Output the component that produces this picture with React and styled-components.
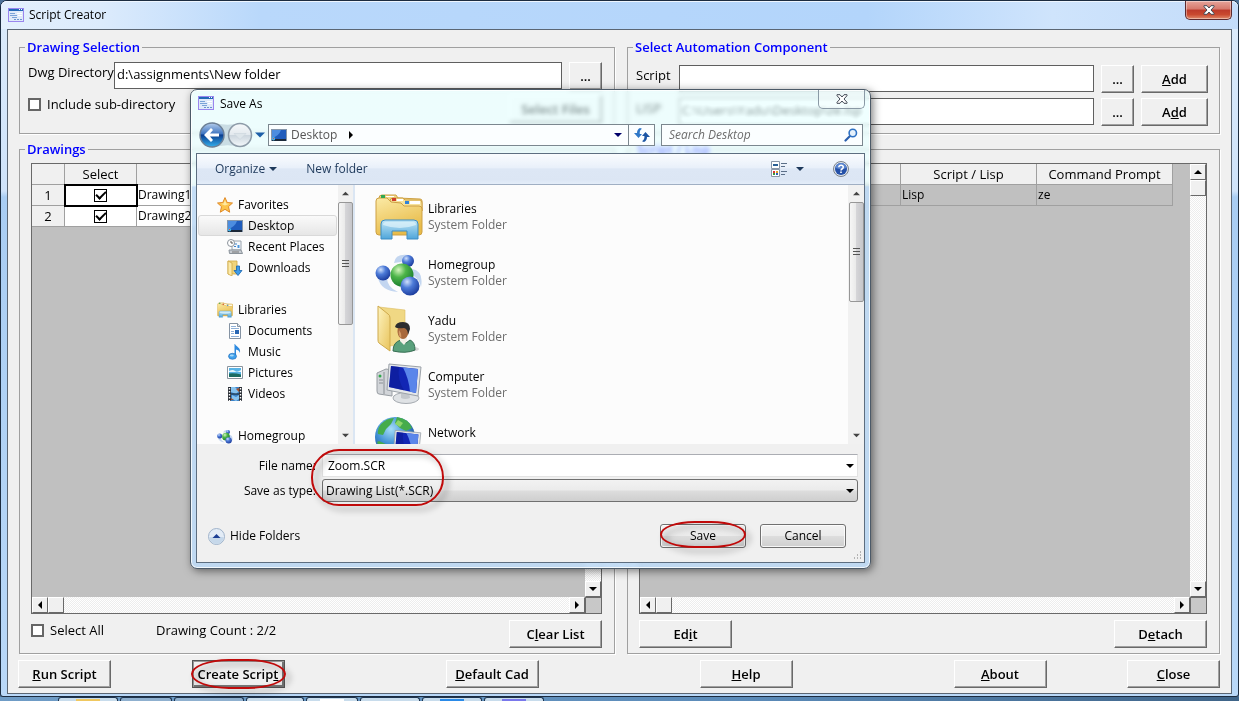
import styled, { createGlobalStyle, css } from 'styled-components';

const GlobalStyle = createGlobalStyle`
    * {
        box-sizing: border-box;
    }
    body {
        margin: 0;
        background: #4d7197;
        color: #000;
        font: 12px/16px 'Open Sans', 'Noto Sans', sans-serif;
    }
    button, input, select {
        font: inherit;
        color: inherit;
        margin: 0;
    }
`
const Screen = styled.div`
    position: relative;
    min-height: 100vh;
    display: flex;
    flex-direction: column;
`

/* ---------- main window ---------- */

const Window = styled.main`
    flex: 1;
    display: flex;
    flex-direction: column;
    border: 1px solid #1c2c40;
    border-radius: 7px 7px 3px 3px;
    background: linear-gradient(#dcebfb 0, #cfe3fa 190px, #a9cdf3 196px, #b9d8f8 100%);
`
const TitleBar = styled.header`
    height: 28px;
    padding: 0 6px 0 7px;
    display: flex;
    align-items: center;
    gap: 5px;
    border-radius: 6px 6px 0 0;
    box-shadow: inset 0 1px #eef6ff;
    background: linear-gradient(90deg, #e4f0fd 0, #dcebfc 100px, #b9d8fb 260px, #b3d5fb 70%, #cfe4fc 85%, #c3dcfa 100%);
`
const Title = styled.h1`
    margin: 0;
    flex: 1;
    font-size: 12px;
    font-weight: 400;
`
const RedClose = styled.button`
    align-self: flex-start;
    width: 47px;
    height: 19px;
    padding: 0;
    display: grid;
    place-items: center;
    border: 1px solid #5c2a2e;
    border-top: 0;
    border-radius: 0 0 5px 5px;
    box-shadow: inset 0 0 0 1px rgba(255, 255, 255, 0.4);
    background: linear-gradient(#e5a49a 0, #d5786c 45%, #bd3a2a 50%, #c9492f 75%, #e08a6a 100%);
`
const Client = styled.div`
    flex: 1;
    margin: 0 6px 2px;
    padding: 8px 11px 5px;
    display: flex;
    flex-direction: column;
    gap: 6px;
    border: 1px solid #5b6673;
    background: #f0f0f0;
    font-size: 13px;
`
const Columns = styled.div`
    flex: 1;
    display: grid;
    grid-template-columns: minmax(0, 596fr) minmax(0, 593fr);
    gap: 12px;
`
const Column = styled.div`
    display: flex;
    flex-direction: column;
    gap: 6px;
`
const Group = styled.fieldset`
    min-width: 0;
    margin: 0;
    padding: ${({ $pad }) => $pad};
    display: flex;
    flex-direction: column;
    gap: 6px;
    border: 1px solid #a0a0a0;
    box-shadow: 1px 1px #fff;
    ${({ $grow }) => ($grow ? 'flex: 1;' : 'height: 96px;')}
`
const Legend = styled.legend`
    margin-left: ${({ $inset }) => $inset};
    padding: 0 2px;
    color: #00f;
    font-size: 13px;
    font-weight: 600;
    line-height: 18px;
`
const FieldRow = styled.div`
    height: 27px;
    display: flex;
    gap: 7px;
`
const FieldLabel = styled.label`
    width: ${({ $width }) => $width};
    margin-right: -7px;
    line-height: 20px;
    white-space: nowrap;
`
const TextBox = styled.input`
    flex: 1;
    min-width: 0;
    padding: 0 2px 4px;
    border: 1px solid #5f5f5f;
    background: #fff;
`
const Button = styled.button`
    width: ${({ $width }) => $width || '93px'};
    height: 28px;
    padding: 0;
    border: 1px solid;
    border-color: #fff #696969 #696969 #fff;
    box-shadow: inset -1px -1px #a0a0a0;
    background: #f0f0f0;
    font-size: 13px;
    font-weight: 600;
    ${({ $focused }) => $focused && css`
        border-color: #555;
        box-shadow: inset 1px 1px #999, inset -2px -2px #777;
    `}
`
const Check = styled.label`
    height: 18px;
    display: flex;
    align-items: center;
    gap: 6px;
`
const Tick = styled.input`
    appearance: none;
    width: 13px;
    height: 13px;
    margin: 0;
    display: grid;
    place-items: center;
    border: ${({ $thin }) => ($thin ? '1px solid #000' : '2px solid #666')};
    background: #fff;
    &:checked::after {
        content: '';
        width: 8px;
        height: 4px;
        margin-bottom: 3px;
        border: solid #000;
        border-width: 0 0 2px 2px;
        transform: rotate(-45deg);
    }
`
const Spacer = styled.span`
    flex: ${({ $grow }) => $grow || 1};
`

/* ---------- sheets ---------- */

const Sheet = styled.div`
    flex: 1;
    display: grid;
    grid-template-columns: minmax(0, 1fr) 16px;
    grid-template-rows: minmax(0, 1fr) 16px;
    border: 1px solid #696969;
    background: #c0c0c0;
`
const SheetBody = styled.div`
    overflow: hidden;
`
const Table = styled.table`
    width: ${({ $width }) => $width};
    table-layout: fixed;
    border-collapse: separate;
    border-spacing: 0;
    th, td {
        height: 21px;
        padding: 0 2px;
        border: solid #a0a0a0;
        border-width: 0 1px 1px 0;
        font-weight: 400;
        line-height: 20px;
        text-align: left;
        white-space: nowrap;
        background: ${({ $rows }) => $rows};
    }
    th {
        text-align: center;
        background: #f0f0f0;
    }
    td {
        padding: 0 1px;
        font-size: 12px;
    }
`
const ActiveCell = styled.td`
    outline: 2px solid #000;
    outline-offset: -1px;
`
const TickHolder = styled.div`
    display: flex;
    justify-content: center;
`
const Bar = styled.div`
    display: flex;
    flex-direction: ${({ $down }) => ($down ? 'column' : 'row')};
    background: repeating-conic-gradient(#fff 0 25%, #ededed 0 50%) 0 0 / 2px 2px;
`
const BarButton = styled.button`
    width: 16px;
    height: 16px;
    padding: 0;
    display: grid;
    place-items: center;
    border: 1px solid;
    border-color: #fff #696969 #696969 #fff;
    background: #f0f0f0;
`
const Corner = styled.div`
    border: solid #696969;
    border-width: 1px 0 0 1px;
    background: #c8c8c8;
`
const SheetFooter = styled.div`
    height: 28px;
    display: flex;
    ${Check} {
        height: 20px;
        width: 125px;
    }
`
const Count = styled.span`
    line-height: 20px;
`
const ButtonRow = styled.div`
    display: flex;
    margin: 0 0 0 -1px;
`
const Marked = styled.span`
    position: relative;
    display: flex;
`
const Ring = styled.i`
    position: absolute;
    inset: ${({ $inset }) => $inset};
    border: 2px solid #c00a0a;
    border-radius: ${({ $round }) => $round};
    filter: drop-shadow(4px 4px 3px rgba(0, 0, 0, 0.4));
    pointer-events: none;
`

/* ---------- save dialog ---------- */

const Dialog = styled.section`
    position: absolute;
    left: 190px;
    top: 89px;
    width: 681px;
    padding: 0 5px 5px;
    border: 1px solid #4c5a68;
    border-radius: 7px;
    box-shadow: inset 0 0 0 1px rgba(255, 255, 255, 0.8), 2px 2px 8px rgba(0, 0, 0, 0.5);
    background:
        linear-gradient(rgba(226, 255, 255, 0.55) 0 95px, rgba(190, 218, 245, 0.9) 97px);
    backdrop-filter: blur(2px) brightness(1.04);
`
const DialogTitle = styled.header`
    height: 34px;
    padding-left: 2px;
    display: flex;
    gap: 6px;
    svg {
        margin-top: 6px;
    }
    h2 {
        flex: 1;
        margin: 6px 0 0;
        font-size: 12px;
        font-weight: 400;
    }
`
const GlassClose = styled.button`
    width: 47px;
    height: 19px;
    padding: 0;
    display: grid;
    place-items: center;
    border: 1px solid #8a99a5;
    border-top: 0;
    border-radius: 0 0 5px 5px;
    background: rgba(255, 255, 255, 0.3);
    svg {
        margin: 0;
    }
`
const NavRow = styled.div`
    height: 22px;
    margin: 0 2px 7px 3px;
    display: flex;
    align-items: center;
`
const PlainButton = styled.button`
    padding: 0;
    display: flex;
    align-items: center;
    gap: ${({ $gap }) => $gap || '0'};
    border: 0;
    background: none;
`
const Address = styled.div`
    flex: 1;
    height: 22px;
    margin: 0 6px 0 3px;
    display: flex;
    align-items: center;
    border: 1px solid #7b878f;
    background: rgba(252, 254, 255, 0.95);
    color: #555;
    svg:first-child {
        margin: 0 4px 0 2px;
    }
`
const AddressName = styled.span`
    flex: 1;
    display: flex;
    align-items: center;
    gap: 8px;
`
const Refresh = styled.button`
    width: 26px;
    height: 20px;
    margin-left: 6px;
    padding: 0;
    display: grid;
    place-items: center;
    border: 0;
    border-left: 1px solid #7b878f;
    background: none;
    svg:first-child {
        margin: 0;
    }
`
const Search = styled.div`
    width: 202px;
    height: 22px;
    padding: 0 4px 0 7px;
    display: flex;
    align-items: center;
    border: 1px solid #7b878f;
    background: rgba(252, 254, 255, 0.95);
    input {
        flex: 1;
        min-width: 0;
        padding: 0;
        border: 0;
        background: none;
    }
    input::placeholder {
        color: #6d6d6d;
        font-style: italic;
    }
`
const DialogClient = styled.div`
    border: 1px solid #5d6e80;
    background: #f0f0f0;
`
const Toolbar = styled.div`
    height: 31px;
    padding: 0 15px 0 18px;
    display: flex;
    align-items: center;
    color: #1e395b;
    border-bottom: 1px solid #a0afc3;
    background: linear-gradient(#fafcfe 0, #e9f0fa 45%, #dde7f5 50%, #dce6f4 85%, #e4edf9 100%);
`
const Panes = styled.div`
    height: 259px;
    display: grid;
    grid-template-columns: 141px 17px 1fr 16px;
    overflow: hidden;
    background: #fcfcfc;
`
const Tree = styled.ul`
    margin: 0;
    padding: 9px 1px 0;
    list-style: none;
    overflow: hidden;
`
const TreeItem = styled.li`
    height: 21px;
    margin-bottom: ${({ $last }) => ($last ? '21px' : '0')};
    border: 1px solid ${({ $active }) => ($active ? '#d9d9d9' : 'transparent')};
    border-radius: 3px;
    background: ${({ $active }) => ($active ? 'linear-gradient(#fafafa, #e6e6e6)' : 'none')};
    a {
        height: 19px;
        padding-left: ${({ $deep }) => ($deep ? '28px' : '18px')};
        display: flex;
        align-items: center;
        gap: 5px;
        color: #000;
        text-decoration: none;
        white-space: nowrap;
    }
`
const AeroBar = styled.div`
    display: flex;
    flex-direction: column;
    align-items: center;
    justify-content: space-between;
    background: #f1f1f1;
    border-right: ${({ $edge }) => ($edge ? '2px solid #dbe6f3' : '0')};
    button {
        width: 15px;
        height: 17px;
        padding: 0;
        display: grid;
        place-items: center;
        border: 0;
        background: none;
    }
`
const AeroThumb = styled.div`
    width: 15px;
    height: ${({ $height }) => $height};
    margin-bottom: auto;
    display: grid;
    place-items: center;
    border: 1px solid #979797;
    border-radius: 2px;
    background: linear-gradient(90deg, #f6f6f6 0, #eaeaea 45%, #d5d5d8 50%, #c6c6ca 100%);
`
const Files = styled.ul`
    margin: 0;
    padding: 4px 0 0 20px;
    list-style: none;
    overflow: hidden;
`
const File = styled.li`
    height: 56px;
    display: flex;
    gap: 5px;
    align-items: center;
    div {
        min-height: 32px;
    }
    small {
        display: block;
        font-size: 12px;
        color: #6d6d6d;
    }
`
const DialogFooter = styled.div`
    position: relative;
    padding: 10px 6px 14px 0;
`
const SaveRow = styled.div`
    height: 23px;
    margin-bottom: 2px;
    display: grid;
    grid-template-columns: 119px 1fr;
    column-gap: 6px;
    align-items: center;
    label {
        text-align: right;
    }
`
const Combo = styled.div`
    position: relative;
    height: 23px;
    display: flex;
    border: 1px solid ${({ $raised }) => ($raised ? '#707070' : '#e3e3e3')};
    border-top-color: ${({ $raised }) => ($raised ? '#707070' : '#abadb3')};
    border-radius: ${({ $raised }) => ($raised ? '3px' : '0')};
    background: ${({ $raised }) => ($raised ? 'linear-gradient(#f2f2f2 0, #ebebeb 48%, #dddddd 52%, #cfcfcf 100%)' : '#fff')};
    input, select {
        flex: 1;
        appearance: none;
        padding: 0 20px 0 ${({ $raised }) => ($raised ? '3px' : '5px')};
        border: 0;
        background: none;
    }
    svg {
        position: absolute;
        right: 3px;
        top: 7px;
        pointer-events: none;
    }
`
const Actions = styled.div`
    margin: 22px 12px 0 11px;
    display: flex;
    gap: 14px;
`
const AeroButton = styled.button`
    width: 86px;
    height: 24px;
    padding: 0;
    border: 1px solid #707070;
    border-radius: 3px;
    box-shadow: inset 0 0 0 1px rgba(255, 255, 255, 0.8);
    background: linear-gradient(#f2f2f2 0, #ebebeb 48%, #dddddd 52%, #cfcfcf 100%);
`
const Grip = styled.svg`
    position: absolute;
    right: 2px;
    bottom: 2px;
`

/* ---------- taskbar ---------- */

const Taskbar = styled.footer`
    height: 4px;
    padding-left: 58px;
    display: flex;
    gap: 2px;
    overflow: hidden;
    background: linear-gradient(90deg, #6f9cc6, #5b8bb9 60%, #3f6488);
`
const Task = styled.div`
    width: ${({ $wide }) => $wide};
    display: flex;
    justify-content: center;
    border: 1px solid #1e3550;
    border-bottom: 0;
    border-radius: 3px 3px 0 0;
    background: ${({ $lit }) => ($lit ? '#c8dcec' : '#8fb0cf')};
    i {
        width: 24px;
        margin-top: 1px;
        background: ${({ $tone }) => $tone};
    }
`

/* ---------- drawings ---------- */

const Arrow = ({ dir = 'down', size = 8, fill = '#000' }) => {
    const d = {
        down: 'M0 2h8L4 6z',
        up: 'M0 6h8L4 2z',
        left: 'M6 0v8L2 4z',
        right: 'M2 0v8l4-4z',
    }[dir]
    return <svg width={size} height={size} viewBox="0 0 8 8"><path d={d} fill={fill} /></svg>
}

const AppIcon = () => (
    <svg width="16" height="14" viewBox="0 0 16 14">
        <rect x=".5" y=".5" width="15" height="13" fill="#dfeafa" stroke="#9a86ee" />
        <path d="M1 1h14v2H1z" fill="#2468b8" />
        <path d="M11 1h1v1h-1zM13 1h1v1h-1z" fill="#fff" />
        <path d="M2 5.500h5M2 7.500h7M4 9.500h5" stroke="#7ba3d8" />
        <path d="M9 5.500h5M10 7.500h4" stroke="#fff" />
        <path d="M6 11.500h2M9 11.500h2M12 11.500h2" stroke="#6c93cc" />
    </svg>
)

const CloseGlyph = () => (
    <svg width="12" height="10" viewBox="0 0 12 10">
        <path d="M1 .7h3L6 3 8 .7h3v1L8 5l3 3.300v1H8L6 7 4 9.300H1v-1L4 5 1 1.700z" fill="#fff" stroke="#434a55" />
    </svg>
)

const NavButtons = () => (
    <svg width="56" height="28" viewBox="0 0 56 28">
        <defs>
            <linearGradient id="back" x2="0" y2="1">
                <stop stopColor="#b4cdec" /><stop offset=".45" stopColor="#3e74c0" />
                <stop offset=".5" stopColor="#0b3d8f" /><stop offset="1" stopColor="#35b1ee" />
            </linearGradient>
            <linearGradient id="fwd" x2="0" y2="1">
                <stop stopColor="#f6f9fb" /><stop offset=".48" stopColor="#e3e9ee" />
                <stop offset=".52" stopColor="#ccd6de" /><stop offset="1" stopColor="#f4f8fb" />
            </linearGradient>
        </defs>
        <path d="M13 1q14 5 28 1v24q-14-4-28 1z" fill="#b4c8d4" opacity=".6" />
        <circle cx="13" cy="14" r="12" fill="url(#back)" stroke="#6d8096" strokeWidth="1.500" />
        <circle cx="41" cy="14" r="11.500" fill="url(#fwd)" stroke="#8d9ba8" strokeWidth="1.500" />
        <path d="M5 14l7-7 2 2-3 3.500h9v3h-9l3 3.500-2 2z" fill="#fff" />
        <path d="M35 12.500h12l-6 6z" fill="#dde5ea" stroke="#c9d4db" strokeWidth=".6" />
    </svg>
)

const RefreshIcon = () => (
    <svg width="16" height="14" viewBox="0 0 16 14">
        <path d="M6 0C4 1 3 2.500 3 5H0l4.500 5L8 6H5.800C5.600 3.500 6 2 8 .800z" fill="#2f78c8" />
        <path d="M10 14c2-1 3-2.500 3-5h3l-4.500-5L8 8h2.400c.2 2.500-.4 4-2.400 5.200z" fill="#1c56a4" />
    </svg>
)

const SearchIcon = () => (
    <svg width="14" height="14" viewBox="0 0 14 14">
        <path d="M1.500 12.500L6 8" stroke="#2a5fae" strokeWidth="2.200" strokeLinecap="round" />
        <circle cx="8.800" cy="5" r="3.700" fill="#e6f2fc" stroke="#2e72c4" strokeWidth="1.600" />
    </svg>
)

const ViewIcon = () => (
    <svg width="16" height="16" viewBox="0 0 16 16">
        <path d="M.5.5h8v7h-8zM.5 8.500h8v7h-8z" fill="#fff" stroke="#8a97a8" />
        <path d="M2 3h5v2H2z" fill="#2a5f94" />
        <path d="M2 10h2v2H2z" fill="#d33" /><path d="M5 10h2v2H5z" fill="#e8a020" />
        <path d="M2 12h2v2H2z" fill="#3a9a3a" /><path d="M5 12h2v2H5z" fill="#2a5fc0" />
        <path d="M10 2.500h6M10 5.500h4M10 10.500h6M10 13.500h4" stroke="#5b6f88" />
    </svg>
)

const HelpIcon = () => (
    <svg width="16" height="16" viewBox="0 0 16 16">
        <circle cx="8" cy="8" r="7.500" fill="#dfe5ec" stroke="#7a828c" />
        <circle cx="8" cy="8" r="6" fill="#2450a8" />
        <path d="M2.500 7a5.500 5 0 0 1 11 0q-5 2-11 0z" fill="#5b86d0" />
        <path d="M5.800 6.300Q6 4.200 8.100 4.200t2.200 1.900Q10.300 7.200 9 8q-1 .6-1 1.400" fill="none" stroke="#fff" strokeWidth="1.500" />
        <path d="M7.200 10.600h1.600v1.500H7.200z" fill="#fff" />
    </svg>
)

const StarIcon = () => (
    <svg width="16" height="16" viewBox="0 0 16 16">
        <path d="M8 .6l2.200 4.900 5.300.5-4 3.600 1.200 5.600L8 12.300l-4.700 2.900 1.200-5.600-4-3.600 5.300-.5z" fill="#fdc44a" stroke="#e08a28" />
        <path d="M8 3l1.400 3.500 3 .3L8 8.500 3.800 6.800l2.800-.3z" fill="#ffeaa4" />
    </svg>
)

const DesktopIcon = () => (
    <svg width="16" height="14" viewBox="0 0 16 14">
        <path d="M0 1h16v12H0z" fill="#8596aa" />
        <path d="M1 2h14v9H1z" fill="#1f5cbc" />
        <path d="M1 2h9Q8 8 1 10z" fill="#4c8de0" />
        <path d="M1 11h14v2H1z" fill="#1b2838" />
        <circle cx="2.500" cy="10.800" r="1.700" fill="#45b4e8" />
        <path d="M2 10h1v1H2z" fill="#e44" />
    </svg>
)

const RecentIcon = () => (
    <svg width="16" height="16" viewBox="0 0 16 16">
        <path d="M5 2h9v9H5z" fill="#f5f8fb" stroke="#98a2ac" />
        <path d="M2 11h12l1.500 3.500h-13z" fill="#c7ccd2" stroke="#8b939b" />
        <path d="M7 5h3M7 7.500h2" stroke="#3c82c8" /><path d="M10.500 6h2v3h-2z" fill="#4b96dd" />
        <path d="M5 13h7" stroke="#777" />
        <circle cx="4" cy="4" r="3.500" fill="#fff" stroke="#8b939b" />
        <path d="M4 2v2h2" fill="none" stroke="#555" />
    </svg>
)

const DownloadIcon = () => (
    <svg width="16" height="16" viewBox="0 0 16 16">
        <path d="M1 1h9v13H1z" fill="#f0d47c" stroke="#cfa845" strokeWidth=".8" />
        <path d="M1 1l4 2v13l-4-2z" fill="#fbe9a8" stroke="#cfa845" strokeWidth=".8" />
        <path d="M9.500 6h3v4.500H15L11 15.500 7 10.500h2.500z" fill="#3f9be8" stroke="#1763ad" strokeWidth=".8" />
    </svg>
)

const LibraryIcon = ({ size = 16 }) => (
    <svg width={size} height={size} viewBox="0 0 48 48">
        <defs>
            <linearGradient id="lib" x2=".4" y2="1">
                <stop stopColor="#fbeaa6" /><stop offset="1" stopColor="#e8bb48" />
            </linearGradient>
            <linearGradient id="shelf" x2="0" y2="1">
                <stop stopColor="#c2e6f6" /><stop offset="1" stopColor="#4fa6da" />
            </linearGradient>
        </defs>
        <path d="M4 5q0-3 3-3h14l2 3 22 1q2 0 2 2v10H4z" fill="#f3d988" stroke="#cda044" />
        <path d="M15 8q0-3 3-3h10l2 2h15q2 0 2 3v8H15z" fill="#f7e29a" stroke="#cda044" />
        <path d="M1 8q0-3 3-3h8l4 4 10 1 3 3h15q3 0 3 3v23q0 3-3 3H4q-3 0-3-3z" fill="url(#lib)" stroke="#cda044" />
        <path d="M6 2h4v3H6z" fill="#32a852" /><path d="M17 5h4v3h-4z" fill="#cf3d2a" /><path d="M30 8h4v3h-4z" fill="#2f82d8" />
        <path d="M22 6h6v2h-6zM35 8h10v3H35zM11 3h8v1h-8z" fill="#fff" />
        <path d="M6 31q0-4 4-4h29q4 0 4 4v15H32v-8H17v8H6z" fill="url(#shelf)" stroke="#3d8dc4" />
        <path d="M8 32q0-3 3-3h27q3 0 3 3-16 6-33 0z" fill="#dff3fb" opacity=".7" />
    </svg>
)

const DocIcon = () => (
    <svg width="16" height="16" viewBox="0 0 16 16">
        <path d="M2.500.5h8l3 3v12h-11z" fill="#fff" stroke="#8593a3" />
        <path d="M10.500.5v3h3" fill="#dfe6ee" stroke="#8593a3" />
        <path d="M4 3.500h5M4 5.500h8M4 8.500h3M4 10.500h3M4 13.500h8" stroke="#8fb1d8" />
        <path d="M8 7h4v4H8z" fill="#2867b4" />
    </svg>
)

const MusicIcon = () => (
    <svg width="16" height="16" viewBox="0 0 16 16">
        <path d="M8 0c1 3 6 3 5 9-1-2.500-2-3-4-3.500V12H7.500V0z" fill="#2d8ae0" />
        <ellipse cx="5.500" cy="12.300" rx="4" ry="3" fill="#3fa1ec" stroke="#1c64b4" strokeWidth=".6" />
        <ellipse cx="4.800" cy="11.500" rx="2" ry="1" fill="#a8dafa" />
    </svg>
)

const PictureIcon = () => (
    <svg width="16" height="14" viewBox="0 0 16 14">
        <path d="M.5.5h15v12H.5z" fill="#fff" stroke="#8a949e" />
        <path d="M2 2h12v9H2z" fill="#59b4e6" />
        <path d="M2 5q4-2 6 0t6-1v2H2z" fill="#e4f6fd" />
        <path d="M2 7.500q5-1 12 1V11H2z" fill="#1a6b62" />
    </svg>
)

const VideoIcon = () => (
    <svg width="16" height="16" viewBox="0 0 16 16">
        <path d="M1 1h14v14H1z" fill="#2b2f36" />
        <path d="M4 1h8v14H4z" fill="#3b82c8" />
        <path d="M4 1h4l4 4-3 3-5-2zM5 9l4 2 3-2v4l-3 2-4-2z" fill="#86c2ee" />
        <path d="M9 3l3-1v4zM4 12l3 2H4z" fill="#a5522e" />
        <path d="M4 8h8" stroke="#1b2027" />
        <path d="M2.500 2v13M13.500 2v13" stroke="#fff" strokeWidth="1.400" strokeDasharray="1.500 1.500" />
    </svg>
)

const HomegroupIcon = ({ size = 16 }) => (
    <svg width={size} height={size} viewBox="0 0 48 48">
        <defs>
            <radialGradient id="blueBall" cx=".35" cy=".28" r=".8">
                <stop stopColor="#cfe0fb" /><stop offset=".4" stopColor="#4d7bd8" /><stop offset="1" stopColor="#163596" />
            </radialGradient>
            <radialGradient id="greenBall" cx=".35" cy=".28" r=".8">
                <stop stopColor="#d4f5bd" /><stop offset=".4" stopColor="#4db549" /><stop offset="1" stopColor="#13752a" />
            </radialGradient>
        </defs>
        <path d="M19 14Q20 4 34 6L26 13zM3 29q3 13 20 14Q12 38 12 29zM37 20q12 2 9 18-2-9-9-12z" fill="#b0c9ec" opacity=".75" />
        <circle cx="33" cy="12" r="6" fill="url(#blueBall)" />
        <circle cx="8" cy="24" r="7.500" fill="url(#blueBall)" />
        <circle cx="27" cy="26" r="11.500" fill="url(#greenBall)" />
        <circle cx="35" cy="37" r="9.500" fill="url(#blueBall)" />
    </svg>
)

const UserIcon = () => (
    <svg width="48" height="48" viewBox="0 0 48 48">
        <defs>
            <linearGradient id="folder" x2="1" y2="1">
                <stop stopColor="#fdf3bf" /><stop offset="1" stopColor="#e9c45c" />
            </linearGradient>
        </defs>
        <ellipse cx="31" cy="44" rx="13" ry="3" fill="#999" opacity=".4" />
        <path d="M4 2l26 3v34l-15 2z" fill="#f0d884" stroke="#dcbc62" strokeWidth=".6" />
        <path d="M3 1l10 8q2 1 2 4v33L4 38q-1-1-1-3z" fill="url(#folder)" stroke="#cfaa4c" />
        <path d="M18 46q0-9 8-11l5 3 4-3q5 2 5 10-9 4-22 1z" fill="#5aa07c" stroke="#356e52" />
        <path d="M25 32h7v4l-3 4-4-4z" fill="#f4f0e8" />
        <ellipse cx="28" cy="26" rx="5.500" ry="8" fill="#a8693c" />
        <path d="M20 22q1-5 8-5 7 0 7 7l-2 6q0-6-4-7-7 1-9-1z" fill="#2c2c2e" />
        <path d="M24 25q3 4 2 8-3-2-2-8z" fill="#d49a66" />
    </svg>
)

const Monitor = () => (
    <g>
        <path d="M14 3l32 3-3 29-31-6z" fill="#e4e7ea" stroke="#9ba1a8" />
        <path d="M16 5l27 3-2 24-27-6z" fill="#1226b4" />
        <path d="M28 6.400L43 8l-2 24-6-1.300Q34 18 28 6.400z" fill="#5a86ea" />
        <path d="M16 5l8 1Q22 18 29 29.300L14 26z" fill="#0c1a94" opacity=".6" />
    </g>
)

const ComputerIcon = () => (
    <svg width="48" height="48" viewBox="0 0 48 48">
        <path d="M2 12l9-4 6 1v26L4 33q-2 0-2-3z" fill="#d2d5d9" stroke="#989da3" />
        <path d="M9 11v22" stroke="#8b9096" /><circle cx="5" cy="15" r="1.500" fill="#2fa84a" />
        <path d="M4 19h4M4 22h4" stroke="#8b9096" />
        <ellipse cx="31" cy="37" rx="13" ry="5.500" fill="#dfe2e5" stroke="#a6abb1" />
        <path d="M26 29l8 2 1 6q-5 2-9 0z" fill="#c3c7cc" />
        <Monitor />
    </svg>
)

const NetworkIcon = () => (
    <svg width="48" height="48" viewBox="0 0 48 48">
        <defs>
            <radialGradient id="globe" cx=".4" cy=".3" r=".75">
                <stop stopColor="#a6def8" /><stop offset=".5" stopColor="#3f8fd4" /><stop offset="1" stopColor="#153f8c" />
            </radialGradient>
        </defs>
        <circle cx="20" cy="20" r="20" fill="url(#globe)" />
        <path d="M6 7q6-6 13-6l-3 6-5 5-3 6-5-1Q2 12 6 7zM22 0q12 2 15 11l-6 3-6-3-5-5zM4 24l9 4-1 9Q5 33 2 25z" fill="#45ac4c" />
        <path d="M23 3l5 3-3 4-5-3z" fill="#8ed66a" />
        <g transform="translate(9 11) scale(.8)"><Monitor /></g>
    </svg>
)

const HideIcon = () => (
    <svg width="17" height="17" viewBox="0 0 17 17">
        <circle cx="8.500" cy="8.500" r="8" fill="#e3ecf6" stroke="#9fb3ca" />
        <path d="M1.500 9h14a7 7 0 0 1-14 0z" fill="#c6d8ea" />
        <path d="M4.500 10L8.500 6l4 4z" fill="#1c3f94" />
    </svg>
)

const tree = [
    { name: 'Favorites', icon: <StarIcon /> },
    { name: 'Desktop', icon: <DesktopIcon />, deep: true, active: true },
    { name: 'Recent Places', icon: <RecentIcon />, deep: true },
    { name: 'Downloads', icon: <DownloadIcon />, deep: true, last: true },
    { name: 'Libraries', icon: <LibraryIcon /> },
    { name: 'Documents', icon: <DocIcon />, deep: true },
    { name: 'Music', icon: <MusicIcon />, deep: true },
    { name: 'Pictures', icon: <PictureIcon />, deep: true },
    { name: 'Videos', icon: <VideoIcon />, deep: true, last: true },
    { name: 'Homegroup', icon: <HomegroupIcon /> },
]

const files = [
    { name: 'Libraries', kind: 'System Folder', icon: <LibraryIcon size={48} /> },
    { name: 'Homegroup', kind: 'System Folder', icon: <HomegroupIcon size={48} /> },
    { name: 'Yadu', kind: 'System Folder', icon: <UserIcon /> },
    { name: 'Computer', kind: 'System Folder', icon: <ComputerIcon /> },
    { name: 'Network', icon: <NetworkIcon /> },
]

const tasks = [
    { wide: '60px', tone: '#f0c860', lit: true },
    { wide: '52px', tone: 'transparent' },
    { wide: '70px', tone: 'transparent' },
    { wide: '58px', tone: 'transparent', lit: true },
    { wide: '52px', tone: '#fff', lit: true },
    { wide: '60px', tone: 'transparent', lit: true },
    { wide: '60px', tone: '#2a8ae8', lit: true },
    { wide: '60px', tone: '#7a78ec', lit: true },
]

function SheetFrame({ children }) {
    return (
        <Sheet>
            <SheetBody>{children}</SheetBody>
            <Bar $down>
                <BarButton aria-label="Scroll up"><Arrow dir="up" /></BarButton>
                <BarButton aria-label="Vertical position" />
                <Spacer />
                <BarButton aria-label="Scroll down"><Arrow /></BarButton>
            </Bar>
            <Bar>
                <BarButton aria-label="Scroll left"><Arrow dir="left" /></BarButton>
                <BarButton aria-label="Horizontal position" />
                <Spacer />
                <BarButton aria-label="Scroll right"><Arrow dir="right" /></BarButton>
            </Bar>
            <Corner />
        </Sheet>
    )
}

function AeroScroll({ height, edge }) {
    return (
        <AeroBar $edge={edge}>
            <button aria-label="Scroll up"><Arrow dir="up" size={7} fill="#444" /></button>
            <AeroThumb $height={height}>
                <svg width="7" height="8" viewBox="0 0 7 8"><path d="M0 .5h7M0 3.500h7M0 6.500h7" stroke="#555" /></svg>
            </AeroThumb>
            <button aria-label="Scroll down"><Arrow size={7} fill="#444" /></button>
        </AeroBar>
    )
}

function SaveDialog() {
    return (
        <Dialog role="dialog" aria-labelledby="save-title">
            <DialogTitle>
                <AppIcon />
                <h2 id="save-title">Save As</h2>
                <GlassClose aria-label="Close dialog"><CloseGlyph /></GlassClose>
            </DialogTitle>
            <NavRow>
                <PlainButton aria-label="Back and forward"><NavButtons /></PlainButton>
                <PlainButton aria-label="Recent pages"><Arrow size={10} fill="#1d5fa8" /></PlainButton>
                <Address>
                    <DesktopIcon />
                    <AddressName>Desktop <Arrow dir="right" /></AddressName>
                    <Arrow fill="#00006a" />
                    <Refresh aria-label="Refresh"><RefreshIcon /></Refresh>
                </Address>
                <Search>
                    <input aria-label="Search Desktop" placeholder="Search Desktop" />
                    <SearchIcon />
                </Search>
            </NavRow>
            <DialogClient>
                <Toolbar>
                    <PlainButton $gap="4px">Organize <Arrow fill="#1e395b" /></PlainButton>
                    <Spacer $grow="0 0 29px" />
                    <PlainButton>New folder</PlainButton>
                    <Spacer />
                    <PlainButton $gap="9px" aria-label="Change view"><ViewIcon /><Arrow fill="#1e395b" /></PlainButton>
                    <Spacer $grow="0 0 29px" />
                    <PlainButton aria-label="Help"><HelpIcon /></PlainButton>
                </Toolbar>
                <Panes>
                    <Tree>
                        {tree.map(({ name, icon, deep, active, last }) => (
                            <TreeItem key={name} $deep={deep} $active={active} $last={last}>
                                <a href="#files">{icon}{name}</a>
                            </TreeItem>
                        ))}
                    </Tree>
                    <AeroScroll height="123px" edge />
                    <Files id="files">
                        {files.map(({ name, kind, icon }) => (
                            <File key={name}>
                                {icon}
                                <div>{name}{kind && <small>{kind}</small>}</div>
                            </File>
                        ))}
                    </Files>
                    <AeroScroll height="100px" />
                </Panes>
                <DialogFooter>
                    <SaveRow>
                        <label htmlFor="file-name">File name:</label>
                        <Combo>
                            <input id="file-name" defaultValue="Zoom.SCR" />
                            <Arrow />
                        </Combo>
                    </SaveRow>
                    <SaveRow>
                        <label htmlFor="file-type">Save as type:</label>
                        <Combo $raised>
                            <select id="file-type"><option>Drawing List(*.SCR)</option></select>
                            <Arrow />
                        </Combo>
                    </SaveRow>
                    <Ring $inset="5px 420px 56px 114px" $round="28px" />
                    <Actions>
                        <PlainButton $gap="5px"><HideIcon />Hide Folders</PlainButton>
                        <Spacer />
                        <Marked>
                            <AeroButton>Save</AeroButton>
                            <Ring $inset="-3px 0 0 0" $round="36px / 14px" />
                        </Marked>
                        <AeroButton>Cancel</AeroButton>
                    </Actions>
                    <Grip width="9" height="9" viewBox="0 0 9 9">
                        <path d="M7 1h1M4 4h1M7 4h1M1 7h1M4 7h1M7 7h1" stroke="#a0a0a0" strokeWidth="1.500" />
                    </Grip>
                </DialogFooter>
            </DialogClient>
        </Dialog>
    )
}

export default function App() {
    return (
        <Screen>
            <GlobalStyle />
            <Window>
                <TitleBar>
                    <AppIcon />
                    <Title>Script Creator</Title>
                    <RedClose aria-label="Close window"><CloseGlyph /></RedClose>
                </TitleBar>
                <Client>
                    <Columns>
                        <Column>
                            <Group $pad="6px 12px 0 8px">
                                <Legend $inset="-3px">Drawing Selection</Legend>
                                <FieldRow>
                                    <FieldLabel $width="86px" htmlFor="dwg">Dwg Directory</FieldLabel>
                                    <TextBox id="dwg" defaultValue="d:\assignments\New folder" />
                                    <Button $width="33px">...</Button>
                                </FieldRow>
                                <FieldRow>
                                    <Check>
                                        <Tick type="checkbox" />
                                        Include sub-directory
                                    </Check>
                                    <Spacer />
                                    <Button>Select Files</Button>
                                </FieldRow>
                            </Group>
                            <Group $pad="5px 12px 5px 11px" $grow>
                                <Legend $inset="-6px">Drawings</Legend>
                                <SheetFrame>
                                    <Table $width="100%" $rows="#fff">
                                        <colgroup><col width="33" /><col width="72" /><col /></colgroup>
                                        <thead>
                                            <tr><th /><th>Select</th><th /></tr>
                                        </thead>
                                        <tbody>
                                            <tr>
                                                <th>1</th>
                                                <ActiveCell><TickHolder><Tick $thin type="checkbox" defaultChecked aria-label="Drawing 1" /></TickHolder></ActiveCell>
                                                <td>Drawing1</td>
                                            </tr>
                                            <tr>
                                                <th>2</th>
                                                <td><TickHolder><Tick $thin type="checkbox" defaultChecked aria-label="Drawing 2" /></TickHolder></td>
                                                <td>Drawing2</td>
                                            </tr>
                                        </tbody>
                                    </Table>
                                </SheetFrame>
                                <SheetFooter>
                                    <Check><Tick type="checkbox" />Select All</Check>
                                    <Count>Drawing Count : 2/2</Count>
                                    <Spacer />
                                    <Button>C<u>l</u>ear List</Button>
                                </SheetFooter>
                            </Group>
                        </Column>
                        <Column>
                            <Group $pad="9px 11px 0 8px">
                                <Legend $inset="-3px">Select Automation Component</Legend>
                                <FieldRow>
                                    <FieldLabel $width="43px" htmlFor="script">Script</FieldLabel>
                                    <TextBox id="script" />
                                    <Button $width="33px">...</Button>
                                    <Button $width="67px"><u>A</u>dd</Button>
                                </FieldRow>
                                <FieldRow>
                                    <FieldLabel $width="43px" htmlFor="lisp">LISP</FieldLabel>
                                    <TextBox id="lisp" defaultValue="C:\Users\Yadu\Desktop\ze.lsp" />
                                    <Button $width="33px">...</Button>
                                    <Button $width="67px">A<u>d</u>d</Button>
                                </FieldRow>
                            </Group>
                            <Group $pad="5px 12px 5px 11px" $grow>
                                <Legend $inset="-4px">Script / Lisp</Legend>
                                <SheetFrame>
                                    <Table $width="533px" $rows="#c0c0c0">
                                        <colgroup><col width="33" /><col width="228" /><col width="136" /><col width="136" /></colgroup>
                                        <thead>
                                            <tr><th /><th /><th>Script / Lisp</th><th>Command Prompt</th></tr>
                                        </thead>
                                        <tbody>
                                            <tr><th /><td /><td>Lisp</td><td>ze</td></tr>
                                        </tbody>
                                    </Table>
                                </SheetFrame>
                                <SheetFooter>
                                    <Button>Ed<u>i</u>t</Button>
                                    <Spacer />
                                    <Button>D<u>e</u>tach</Button>
                                </SheetFooter>
                            </Group>
                        </Column>
                    </Columns>
                    <ButtonRow>
                        <Button><u>R</u>un Script</Button>
                        <Spacer />
                        <Marked>
                            <Button $focused>Create Scrip<u>t</u></Button>
                            <Ring $inset="-1px" $round="38px / 15px" />
                        </Marked>
                        <Spacer $grow="2" />
                        <Button><u>D</u>efault Cad</Button>
                        <Spacer $grow="2" />
                        <Button><u>H</u>elp</Button>
                        <Spacer $grow="2" />
                        <Button><u>A</u>bout</Button>
                        <Spacer />
                        <Button><u>C</u>lose</Button>
                    </ButtonRow>
                </Client>
            </Window>
            <Taskbar>
                {tasks.map(({ wide, tone, lit }, i) => (
                    <Task key={i} $wide={wide} $tone={tone} $lit={lit}><i /></Task>
                ))}
            </Taskbar>
            <SaveDialog />
        </Screen>
    )
}
